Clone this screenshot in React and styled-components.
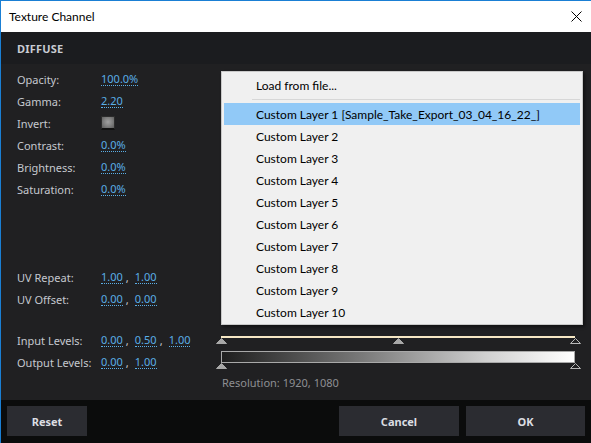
import React from "react";
import styled, { createGlobalStyle } from "styled-components";

const Global = createGlobalStyle`
  html, body { margin: 0; padding: 0; background: #202022; }
  * { box-sizing: border-box; }
`;

const Window = styled.div`
  width: 591px;
  height: 443px;
  display: flex;
  flex-direction: column;
  border-top: 1px solid #1a7fd4;
  border-left: 1px solid #1a7fd4;
  font-family: "Noto Sans", "Open Sans", sans-serif;
  overflow: hidden;
`;

const TitleBar = styled.div`
  height: 31px;
  flex: none;
  background: #ffffff;
  display: flex;
  align-items: center;
  justify-content: space-between;
  padding: 0 9px 0 8px;
  font-family: "Lato", "Noto Sans", sans-serif;
  font-size: 12px;
  color: #000;
`;

const CloseButton = styled.div`
  width: 12px;
  height: 12px;
  display: flex;
  align-items: center;
  justify-content: center;
`;

const Header = styled.div`
  height: 32px;
  flex: none;
  background: #1b1c1f;
  display: flex;
  align-items: center;
  padding-left: 16px;
  font-size: 11px;
  font-weight: 700;
  color: #c9ccd4;
  letter-spacing: 0.2px;
`;

const Body = styled.div`
  flex: 1;
  background: #202022;
  position: relative;
  display: flex;
`;

const LeftPanel = styled.div`
  width: 215px;
  flex: none;
  padding: 4px 0 0 16px;
  display: flex;
  flex-direction: column;
`;

const Group = styled.div`
  display: flex;
  flex-direction: column;
  margin-top: ${(p) => p.$gap || 0}px;
`;

const Row = styled.div`
  height: 22px;
  display: flex;
  align-items: center;
  font-size: 11px;
`;

const Label = styled.span`
  width: 84px;
  flex: none;
  color: #c5c8cf;
`;

const Values = styled.span`
  display: flex;
  align-items: center;
  color: #5aaee6;
`;

const Value = styled.span`
  color: #5aaee6;
  line-height: 12px;
  border-bottom: 1px dotted #5aaee6;
`;

const Sep = styled.span`
  color: #c5c8cf;
  width: 12px;
  padding-left: 3px;
`;

const Checkbox = styled.span`
  width: 14px;
  height: 14px;
  display: inline-block;
  background: radial-gradient(circle at 50% 45%, #a0a0a0 0%, #808080 50%, #5a5a5a 100%);
  border: 1px solid #2c2c2c;
  border-bottom: 2px solid #111;
`;

const RightPanel = styled.div`
  flex: 1;
  display: flex;
  flex-direction: column;
  padding: 265px 10px 0 0;
`;

const SliderBox = styled.div`
  position: relative;
  height: 22px;
  width: 364px;
  padding: 0 5px;
`;

const Track = styled.div`
  margin-top: ${(p) => p.$top}px;
  height: ${(p) => p.$h}px;
  background: ${(p) => p.$bg};
  border: ${(p) => p.$border || "none"};
`;

const Handle = styled.svg`
  position: absolute;
  width: 11px;
  height: 6px;
  margin-left: -5.5px;
  overflow: visible;
`;

const Resolution = styled.div`
  height: 14px;
  margin-top: 3px;
  padding-left: 6px;
  font-size: 11px;
  line-height: 14px;
  color: #8e8f93;
`;

const Menu = styled.div`
  position: absolute;
  top: 7px;
  left: 220px;
  width: 362px;
  background: #f0f0f0;
  border: 1px solid #c9c9c9;
  box-shadow: 2px 2px 3px rgba(0, 0, 0, 0.45);
  padding: 2px 2px 1px 2px;
  font-family: "Lato", "Noto Sans", sans-serif;
  font-size: 12px;
  color: #000;
`;

const MenuItem = styled.div`
  height: 22px;
  display: flex;
  align-items: center;
  padding-left: 32px;
  background: ${(p) => (p.$active ? "#91c9f7" : "transparent")};
`;

const MenuSeparator = styled.div`
  height: 7px;
  display: flex;
  align-items: center;
  padding-left: 28px;
  &::after {
    content: "";
    flex: 1;
    height: 1px;
    background: #d7d7d7;
  }
`;

const Footer = styled.div`
  height: 43px;
  flex: none;
  background: #0b0c0c;
  display: flex;
  align-items: flex-start;
  padding: 6px 6px 0 6px;
  gap: 7px;
`;

const Button = styled.button`
  width: ${(p) => p.$w}px;
  height: 30px;
  border: none;
  background: #2b2c31;
  color: #dcdee2;
  font-family: "Noto Sans", "Open Sans", sans-serif;
  font-size: 11px;
  font-weight: 700;
  margin-left: ${(p) => (p.$push ? "auto" : "0")};
  padding: 0;
`;

function Tri({ pos, top, outline }) {
  return (
    <Handle style={{ left: `calc(5px + ${pos * 354}px)`, top }} viewBox="0 0 11 6">
      <polygon
        points="5.5,0.5 10.5,5.5 0.5,5.5"
        fill={outline ? "#202022" : "#a8a8a8"}
        stroke={outline ? "#b8b8b8" : "#a8a8a8"}
        strokeWidth="1"
      />
    </Handle>
  );
}

function V({ items }) {
  return (
    <Values>
      {items.map((v, i) => (
        <React.Fragment key={i}>
          {i > 0 && <Sep>,</Sep>}
          <Value>{v}</Value>
        </React.Fragment>
      ))}
    </Values>
  );
}

export default function App() {
  const layers = Array.from({ length: 10 }, (_, i) =>
    i === 0 ? "Custom Layer 1 [Sample_Take_Export_03_04_16_22_]" : `Custom Layer ${i + 1}`
  );
  return (
    <>
      <Global />
      <Window>
        <TitleBar>
          <span>Texture Channel</span>
          <CloseButton>
            <svg width="11" height="11" viewBox="0 0 11 11">
              <path d="M0.5 0.5 L10.5 10.5 M10.5 0.5 L0.5 10.5" stroke="#000" strokeWidth="1" />
            </svg>
          </CloseButton>
        </TitleBar>
        <Header>DIFFUSE</Header>
        <Body>
          <LeftPanel>
            <Group>
              <Row><Label>Opacity:</Label><V items={["100.0%"]} /></Row>
              <Row><Label>Gamma:</Label><V items={["2.20"]} /></Row>
              <Row><Label>Invert:</Label><Checkbox /></Row>
              <Row><Label>Contrast:</Label><V items={["0.0%"]} /></Row>
              <Row><Label>Brightness:</Label><V items={["0.0%"]} /></Row>
              <Row><Label>Saturation:</Label><V items={["0.0%"]} /></Row>
            </Group>
            <Group $gap={66}>
              <Row><Label>UV Repeat:</Label><V items={["1.00", "1.00"]} /></Row>
              <Row><Label>UV Offset:</Label><V items={["0.00", "0.00"]} /></Row>
            </Group>
            <Group $gap={19}>
              <Row><Label>Input Levels:</Label><V items={["0.00", "0.50", "1.00"]} /></Row>
              <Row><Label>Output Levels:</Label><V items={["0.00", "1.00"]} /></Row>
            </Group>
          </LeftPanel>
          <RightPanel>
            <SliderBox>
              <Track $top={7} $h={2} $bg="#f6e7c4" />
              <Tri pos={0} top={9} />
              <Tri pos={0.5} top={9} />
              <Tri pos={1} top={9} outline />
            </SliderBox>
            <SliderBox>
              <Track
                $top={0}
                $h={12}
                $bg="linear-gradient(to right, #1e1e1e 0%, #7a7a7a 40%, #d0d0d0 75%, #ffffff 100%)"
                $border="1px solid #a9a9a9"
              />
              <Tri pos={0} top={12} />
              <Tri pos={1} top={12} outline />
            </SliderBox>
            <Resolution>Resolution: 1920, 1080</Resolution>
          </RightPanel>
          <Menu>
            <MenuItem>Load from file...</MenuItem>
            <MenuSeparator />
            {layers.map((l, i) => (
              <MenuItem key={l} $active={i === 0}>{l}</MenuItem>
            ))}
          </Menu>
        </Body>
        <Footer>
          <Button $w={80}>Reset</Button>
          <Button $w={120} $push>Cancel</Button>
          <Button $w={119}>OK</Button>
        </Footer>
      </Window>
    </>
  );
}
